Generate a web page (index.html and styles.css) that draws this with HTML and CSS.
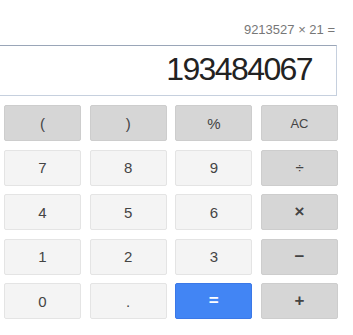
FILE: index.html
```html
<!DOCTYPE html>
<html lang="en">
<head>
    <meta charset="UTF-8">
    <meta name="viewport" content="width=device-width, initial-scale=1.0">
    <title>Calculator</title>
    <link rel="stylesheet" href="styles.css">
</head>
<body>

    <div class="formula">9213527 × 21 =</div>
    <div class="display">193484067</div>

    <div class="keys">
        <button class="key op">(</button>
        <button class="key op">)</button>
        <button class="key op">%</button>
        <button class="key op small">AC</button>

        <button class="key">7</button>
        <button class="key">8</button>
        <button class="key">9</button>
        <button class="key op">÷</button>

        <button class="key">4</button>
        <button class="key">5</button>
        <button class="key">6</button>
        <button class="key op sign">×</button>

        <button class="key">1</button>
        <button class="key">2</button>
        <button class="key">3</button>
        <button class="key op sign">−</button>

        <button class="key">0</button>
        <button class="key">.</button>
        <button class="key equals">=</button>
        <button class="key op sign">+</button>
    </div>

</body>
</html>
```

FILE: styles.css
```css
body { margin: 0; background: #fff; font-family: "Liberation Sans", Arial, sans-serif; }

.formula { margin-top: 22px; height: 16px; line-height: 16px; font-size: 13px; color: #777; text-align: right; padding-right: 18px; }

.display { margin-top: 7px; width: 312px; padding: 7px 24px 10px 0; border: 1px solid #c6d0de; border-top-color: #9aa6b8; border-left: none; font-size: 32px; line-height: 32px; letter-spacing: -1.6px; color: #222; text-align: right; }

.keys { display: grid; grid-template-columns: repeat(4, 1fr); grid-auto-rows: 36px; column-gap: 8.67px; row-gap: 8.5px; width: 334px; margin: 9px 0 0 4px; }

.key { margin: 0; padding: 0; border: 1px solid #e4e4e4; border-radius: 2px; background: #f4f4f4; font-family: inherit; font-size: 15px; color: #444; }
.op { background: #d6d6d6; border-color: #cdcdcd; }
.small { font-size: 13px; }
.sign { font-size: 17px; font-weight: bold; color: #444; }
.equals { background: #4285f4; border-color: #3b78e7; color: #fff; font-size: 17px; font-weight: bold; }
```
